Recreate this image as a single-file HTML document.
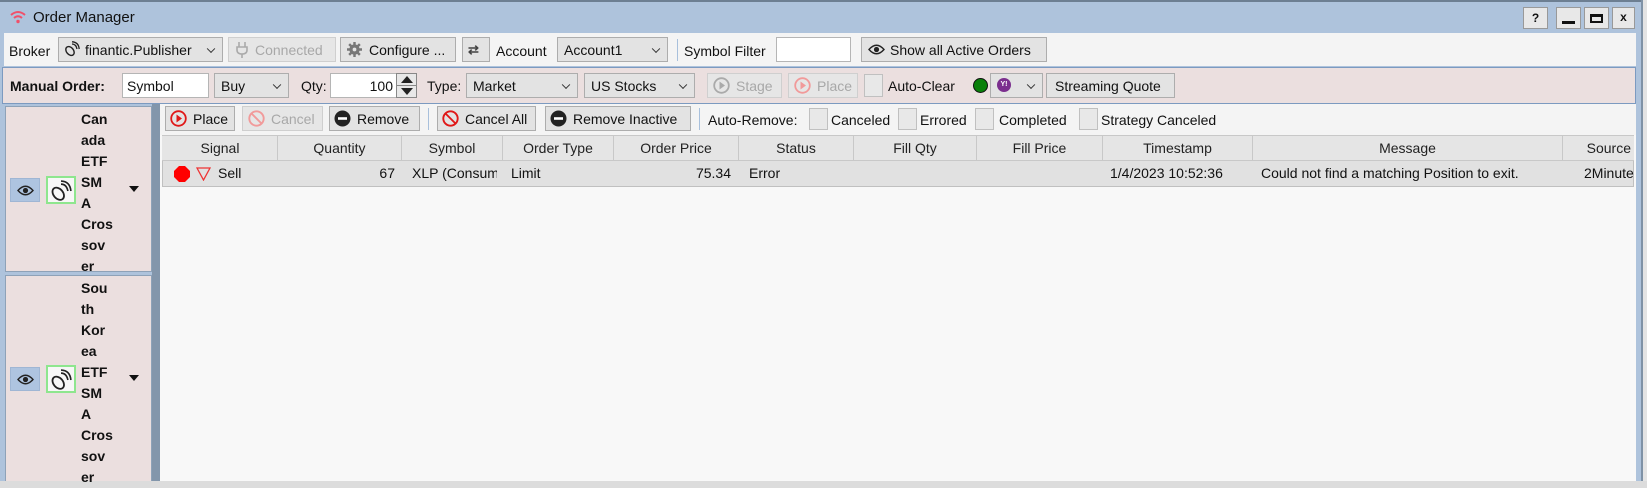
<!DOCTYPE html>
<html><head><meta charset="utf-8"><style>
*{box-sizing:border-box;margin:0;padding:0}
body{width:1647px;height:481px;overflow:hidden;background:#dcdcdc;font-family:"Liberation Sans",sans-serif;font-size:14px;color:#111;position:relative}
.a{position:absolute}
.btn{position:absolute;background:#e3e3e3;border:1px solid #adadad;display:flex;align-items:center;padding-left:6px;white-space:nowrap;font-size:14px}
.dis{color:#a8a8a8;background:#e6e6e6;border-color:#cfcfcf}
.cmb{position:absolute;background:#e3e3e3;border:1px solid #adadad;display:flex;align-items:center;padding-left:6px;font-size:14px}
.cmb:after{content:"";position:absolute;right:8px;top:50%;width:5px;height:5px;border-right:1.5px solid #333;border-bottom:1.5px solid #333;transform:translateY(-70%) rotate(45deg)}
.inp{position:absolute;background:#fff;border:1px solid #b5b5b5;display:flex;align-items:center;padding-left:4px;font-size:14px}
.chk{position:absolute;width:19px;height:19px;background:#e8e8e8;border:1px solid #c0c0c0}
.lbl{position:absolute;font-size:14px;white-space:nowrap}
.sep{position:absolute;width:1px;background:#a8c0dc}
.hd{position:absolute;top:136px;height:24px;border-right:1px solid #c8c8c8;text-align:center;line-height:24px;font-size:14px;color:#222}
.cell{position:absolute;top:161px;height:25px;line-height:25px;font-size:14px;white-space:nowrap;overflow:hidden}
.nm{position:absolute;left:81px;font-weight:bold;font-size:14px;line-height:21px;width:45px}
.eye{position:absolute;left:10px;width:30px;height:24px;background:#aec4e0;border:1px solid #9fb6d4}
.ic{position:absolute;left:46px;width:30px;height:28px;border:2px solid #8ee68e;background:#f7f7f7}
.arr{position:absolute;left:129px;width:0;height:0;border-left:5px solid transparent;border-right:5px solid transparent;border-top:6px solid #111}
</style></head><body>
<div class="a" style="left:0;top:0;width:1641px;height:481px;background:#aec3dc"></div>
<div class="a" style="left:0;top:0;width:1641px;height:2px;background:#6d7f92"></div>
<div class="a" style="left:1641px;top:0;width:6px;height:481px;background:#e4e4e4;border-left:2px solid #7f92a6"></div>
<svg class="a" style="left:9px;top:10px" width="18" height="14" viewBox="0 0 18 14"><path d="M2 5 Q9 -1 16 5" stroke="#f0506a" stroke-width="2" fill="none"/><path d="M5 8 Q9 4.5 13 8" stroke="#f0506a" stroke-width="2" fill="none"/><circle cx="9" cy="11.5" r="1.7" fill="#f0506a"/></svg>
<div class="lbl" style="left:33px;top:9px;font-size:15px">Order Manager</div>
<div class="a" style="left:1523px;top:7px;width:25px;height:22px;background:#e8e8e8;border:1px solid #999;text-align:center;font-weight:bold;font-size:12px;line-height:20px">?</div>
<div class="a" style="left:1556px;top:7px;width:25px;height:22px;background:#e8e8e8;border:1px solid #999"><div class="a" style="left:5px;top:13px;width:13px;height:3px;background:#111"></div></div>
<div class="a" style="left:1584px;top:7px;width:25px;height:22px;background:#e8e8e8;border:1px solid #999"><div class="a" style="left:5px;top:6px;width:13px;height:9px;border:2px solid #111;border-top-width:3px"></div></div>
<div class="a" style="left:1612px;top:7px;width:23px;height:22px;background:#e8e8e8;border:1px solid #999;text-align:center;font-weight:bold;font-size:12px;line-height:19px">x</div>
<div class="a" style="left:4px;top:33px;width:1632px;height:33px;background:#f4f4f4"></div>
<div class="lbl" style="left:9px;top:43px">Broker</div>
<div class="cmb" style="left:58px;top:37px;width:165px;height:25px;padding-left:26px">finantic.Publisher</div>
<svg class="a" style="left:64px;top:41px" width="16" height="16" viewBox="0 0 16 16"><ellipse cx="6" cy="10" rx="3.5" ry="5" transform="rotate(-40 6 10)" fill="none" stroke="#222" stroke-width="1.4"/><path d="M8 3 Q12 3 13 8 M8 0.8 Q14.5 1 15.2 8" stroke="#222" stroke-width="1.3" fill="none"/></svg>
<div class="btn dis" style="left:228px;top:37px;width:108px;height:25px;padding-left:26px">Connected</div>
<svg class="a" style="left:235px;top:42px" width="14" height="16" viewBox="0 0 14 16"><path d="M4 0V5M10 0V5M2 5H12V8Q12 12 7 12Q2 12 2 8ZM7 12V16" stroke="#aaa" stroke-width="1.6" fill="none"/></svg>
<div class="btn" style="left:340px;top:37px;width:116px;height:25px;padding-left:28px">Configure ...</div>
<svg class="a" style="left:347px;top:42px" width="15" height="15" viewBox="0 0 16 16"><circle cx="8" cy="8" r="5.5" fill="#777"/><path d="M8 0V16M0 8H16M2.3 2.3L13.7 13.7M13.7 2.3L2.3 13.7" stroke="#777" stroke-width="2.6"/><circle cx="8" cy="8" r="2" fill="#e3e3e3"/></svg>
<div class="btn" style="left:462px;top:37px;width:28px;height:25px"></div>
<div class="lbl" style="left:468px;top:42px;font-size:13px;font-weight:bold;color:#444">⇄</div>
<div class="lbl" style="left:496px;top:43px">Account</div>
<div class="cmb" style="left:557px;top:37px;width:111px;height:25px">Account1</div>
<div class="sep" style="left:677px;top:39px;height:22px"></div>
<div class="lbl" style="left:684px;top:43px">Symbol Filter</div>
<div class="inp" style="left:776px;top:37px;width:75px;height:25px"></div>
<div class="btn" style="left:861px;top:37px;width:186px;height:25px;padding-left:28px">Show all Active Orders</div>
<svg class="a" style="left:868px;top:44px" width="17" height="11" viewBox="0 0 17 11"><path d="M1 5.5Q8.5 -3 16 5.5Q8.5 14 1 5.5Z" fill="none" stroke="#222" stroke-width="1.4"/><circle cx="8.5" cy="5.5" r="2.6" fill="#222"/></svg>
<div class="a" style="left:2px;top:67px;width:1634px;height:37px;background:#ebdfdf;border:1px solid #7c9ac0"></div>
<div class="lbl" style="left:10px;top:78px;font-weight:bold">Manual Order:</div>
<div class="inp" style="left:122px;top:73px;width:87px;height:25px">Symbol</div>
<div class="cmb" style="left:214px;top:73px;width:75px;height:25px">Buy</div>
<div class="lbl" style="left:301px;top:78px">Qty:</div>
<div class="inp" style="left:330px;top:73px;width:67px;height:25px;justify-content:flex-end;padding-right:3px">100</div>
<div class="a" style="left:396px;top:73px;width:21px;height:25px;background:#e8e8e8;border:1px solid #888"><div class="a" style="left:4px;top:2px;border-left:6px solid transparent;border-right:6px solid transparent;border-bottom:7px solid #222"></div><div class="a" style="left:0;top:11px;width:19px;height:1px;background:#888"></div><div class="a" style="left:4px;top:14px;border-left:6px solid transparent;border-right:6px solid transparent;border-top:7px solid #222"></div></div>
<div class="lbl" style="left:427px;top:78px">Type:</div>
<div class="cmb" style="left:466px;top:73px;width:112px;height:25px">Market</div>
<div class="cmb" style="left:584px;top:73px;width:111px;height:25px">US Stocks</div>
<div class="btn dis" style="left:707px;top:73px;width:75px;height:25px;padding-left:28px">Stage</div>
<svg class="a" style="left:713px;top:77px" width="17" height="17" viewBox="0 0 17 17"><circle cx="8.5" cy="8.5" r="7.3" fill="none" stroke="#aaa" stroke-width="1.8"/><path d="M6.5 4.5L12 8.5L6.5 12.5Z" fill="#aaa"/></svg>
<div class="btn dis" style="left:788px;top:73px;width:70px;height:25px;padding-left:28px">Place</div>
<svg class="a" style="left:794px;top:77px" width="17" height="17" viewBox="0 0 17 17"><circle cx="8.5" cy="8.5" r="7.3" fill="none" stroke="#f19a9a" stroke-width="1.8"/><path d="M6.5 4.5L12 8.5L6.5 12.5Z" fill="#f19a9a"/></svg>
<div class="chk" style="left:864px;top:74px;height:23px;width:19px"></div>
<div class="lbl" style="left:888px;top:78px">Auto-Clear</div>
<div class="a" style="left:973px;top:78px;width:15px;height:15px;border-radius:50%;background:#0a800a;border:1px solid #111"></div>
<div class="cmb" style="left:990px;top:73px;width:53px;height:25px"></div>
<div class="a" style="left:997px;top:78px;width:14px;height:14px;border-radius:50%;background:#7b2f8e;color:#fff;font-size:7px;line-height:14px;text-align:center;font-weight:bold">Y!</div>
<div class="btn" style="left:1046px;top:73px;width:129px;height:25px;padding-left:8px">Streaming Quote</div>
<div class="a" style="left:4px;top:104px;width:148px;height:377px;background:#aec3dc"></div>
<div class="a" style="left:152px;top:104px;width:8px;height:377px;background:#8396ab"></div>
<div class="a" style="left:160px;top:104px;width:1476px;height:377px;background:#f8f8f8"></div>
<div class="a" style="left:160px;top:104px;width:1476px;height:31px;background:#f4f4f4"></div>
<div class="btn" style="left:165px;top:106px;width:70px;height:25px;padding-left:27px">Place</div>
<svg class="a" style="left:170px;top:110px" width="17" height="17" viewBox="0 0 17 17"><circle cx="8.5" cy="8.5" r="7.3" fill="none" stroke="#e01818" stroke-width="1.8"/><path d="M6.5 4.5L12 8.5L6.5 12.5Z" fill="#e01818"/></svg>
<div class="btn dis" style="left:242px;top:106px;width:81px;height:25px;padding-left:28px">Cancel</div>
<svg class="a" style="left:248px;top:110px" width="17" height="17" viewBox="0 0 17 17"><circle cx="8.5" cy="8.5" r="7.2" fill="none" stroke="#f19a9a" stroke-width="1.9"/><path d="M3.5 3.5L13.5 13.5" stroke="#f19a9a" stroke-width="1.9"/></svg>
<div class="btn" style="left:329px;top:106px;width:91px;height:25px;padding-left:27px">Remove</div>
<svg class="a" style="left:334px;top:110px" width="17" height="17" viewBox="0 0 17 17"><circle cx="8.5" cy="8.5" r="8" fill="#222"/><rect x="4" y="7.2" width="9" height="2.6" fill="#fff"/></svg>
<div class="sep" style="left:428px;top:108px;height:22px"></div>
<div class="btn" style="left:437px;top:106px;width:99px;height:25px;padding-left:27px">Cancel All</div>
<svg class="a" style="left:442px;top:110px" width="17" height="17" viewBox="0 0 17 17"><circle cx="8.5" cy="8.5" r="7.2" fill="none" stroke="#e01818" stroke-width="1.9"/><path d="M3.5 3.5L13.5 13.5" stroke="#e01818" stroke-width="1.9"/></svg>
<div class="btn" style="left:545px;top:106px;width:146px;height:25px;padding-left:27px">Remove Inactive</div>
<svg class="a" style="left:550px;top:110px" width="17" height="17" viewBox="0 0 17 17"><circle cx="8.5" cy="8.5" r="8" fill="#222"/><rect x="4" y="7.2" width="9" height="2.6" fill="#fff"/></svg>
<div class="sep" style="left:699px;top:108px;height:22px"></div>
<div class="lbl" style="left:708px;top:112px">Auto-Remove:</div>
<div class="chk" style="left:809px;top:108px;height:22px"></div><div class="lbl" style="left:831px;top:112px">Canceled</div>
<div class="chk" style="left:898px;top:108px;height:22px"></div><div class="lbl" style="left:920px;top:112px">Errored</div>
<div class="chk" style="left:975px;top:108px;height:22px"></div><div class="lbl" style="left:999px;top:112px">Completed</div>
<div class="chk" style="left:1079px;top:108px;height:22px"></div><div class="lbl" style="left:1101px;top:112px">Strategy Canceled</div>
<div class="a" style="left:162px;top:135px;width:1472px;height:26px;background:#e5e5e5;border-top:1px solid #c8c8c8;border-bottom:1px solid #c8c8c8"></div>
<div class="hd" style="left:163px;width:115px">Signal</div>
<div class="hd" style="left:278px;width:124px">Quantity</div>
<div class="hd" style="left:402px;width:101px">Symbol</div>
<div class="hd" style="left:503px;width:111px">Order Type</div>
<div class="hd" style="left:614px;width:125px">Order Price</div>
<div class="hd" style="left:739px;width:115px">Status</div>
<div class="hd" style="left:854px;width:123px">Fill Qty</div>
<div class="hd" style="left:977px;width:126px">Fill Price</div>
<div class="hd" style="left:1103px;width:150px">Timestamp</div>
<div class="hd" style="left:1253px;width:310px">Message</div>
<div class="hd" style="left:1563px;width:70px;text-align:right;border:none;padding-right:2px">Source</div>
<div class="a" style="left:162px;top:161px;width:1472px;height:26px;background:#e1e1e1;border:1px solid #c0c0c0;border-top:none"></div>
<svg class="a" style="left:174px;top:166px" width="16" height="16" viewBox="0 0 16 16"><path d="M5 0H11L16 5V11L11 16H5L0 11V5Z" fill="#f00"/></svg>
<svg class="a" style="left:196px;top:167px" width="15" height="14" viewBox="0 0 15 14"><path d="M1 1H14L7.5 13Z" fill="none" stroke="#e33" stroke-width="1.3"/></svg>
<div class="cell" style="left:218px">Sell</div>
<div class="cell" style="left:300px;width:95px;text-align:right">67</div>
<div class="cell" style="left:412px;width:85px">XLP (Consumer</div>
<div class="cell" style="left:511px">Limit</div>
<div class="cell" style="left:640px;width:91px;text-align:right">75.34</div>
<div class="cell" style="left:749px">Error</div>
<div class="cell" style="left:1110px">1/4/2023 10:52:36</div>
<div class="cell" style="left:1261px">Could not find a matching Position to exit.</div>
<div class="cell" style="left:1584px;width:50px">2MinuteS</div>
<div class="a" style="left:5px;top:106px;width:147px;height:166px;background:#ebdfdf;border:1px solid #8ea2b8"></div>
<div class="eye" style="top:178px"></div>
<svg class="a" style="left:17px;top:185px" width="17" height="11" viewBox="0 0 17 11"><path d="M1 5.5Q8.5 -3 16 5.5Q8.5 14 1 5.5Z" fill="none" stroke="#222" stroke-width="1.4"/><circle cx="8.5" cy="5.5" r="2.6" fill="#222"/></svg>
<div class="ic" style="top:176px"></div>
<svg class="a" style="left:50px;top:180px" width="22" height="22" viewBox="0 0 16 16"><ellipse cx="6" cy="10" rx="3.5" ry="5" transform="rotate(-40 6 10)" fill="none" stroke="#222" stroke-width="1.3"/><path d="M8 3 Q12 3 13 8 M8 0.8 Q14.5 1 15.2 8" stroke="#222" stroke-width="1.2" fill="none"/></svg>
<div class="nm" style="top:109px">Can<br>ada<br>ETF<br>SM<br>A<br>Cros<br>sov<br>er</div>
<div class="arr" style="top:186px"></div>
<div class="a" style="left:5px;top:275px;width:147px;height:206px;background:#ebdfdf;border:1px solid #8ea2b8;border-bottom:none"></div>
<div class="eye" style="top:367px"></div>
<svg class="a" style="left:17px;top:374px" width="17" height="11" viewBox="0 0 17 11"><path d="M1 5.5Q8.5 -3 16 5.5Q8.5 14 1 5.5Z" fill="none" stroke="#222" stroke-width="1.4"/><circle cx="8.5" cy="5.5" r="2.6" fill="#222"/></svg>
<div class="ic" style="top:365px"></div>
<svg class="a" style="left:50px;top:369px" width="22" height="22" viewBox="0 0 16 16"><ellipse cx="6" cy="10" rx="3.5" ry="5" transform="rotate(-40 6 10)" fill="none" stroke="#222" stroke-width="1.3"/><path d="M8 3 Q12 3 13 8 M8 0.8 Q14.5 1 15.2 8" stroke="#222" stroke-width="1.2" fill="none"/></svg>
<div class="nm" style="top:278px">Sou<br>th<br>Kor<br>ea<br>ETF<br>SM<br>A<br>Cros<br>sov<br>er</div>
<div class="arr" style="top:375px"></div>
</body></html>
